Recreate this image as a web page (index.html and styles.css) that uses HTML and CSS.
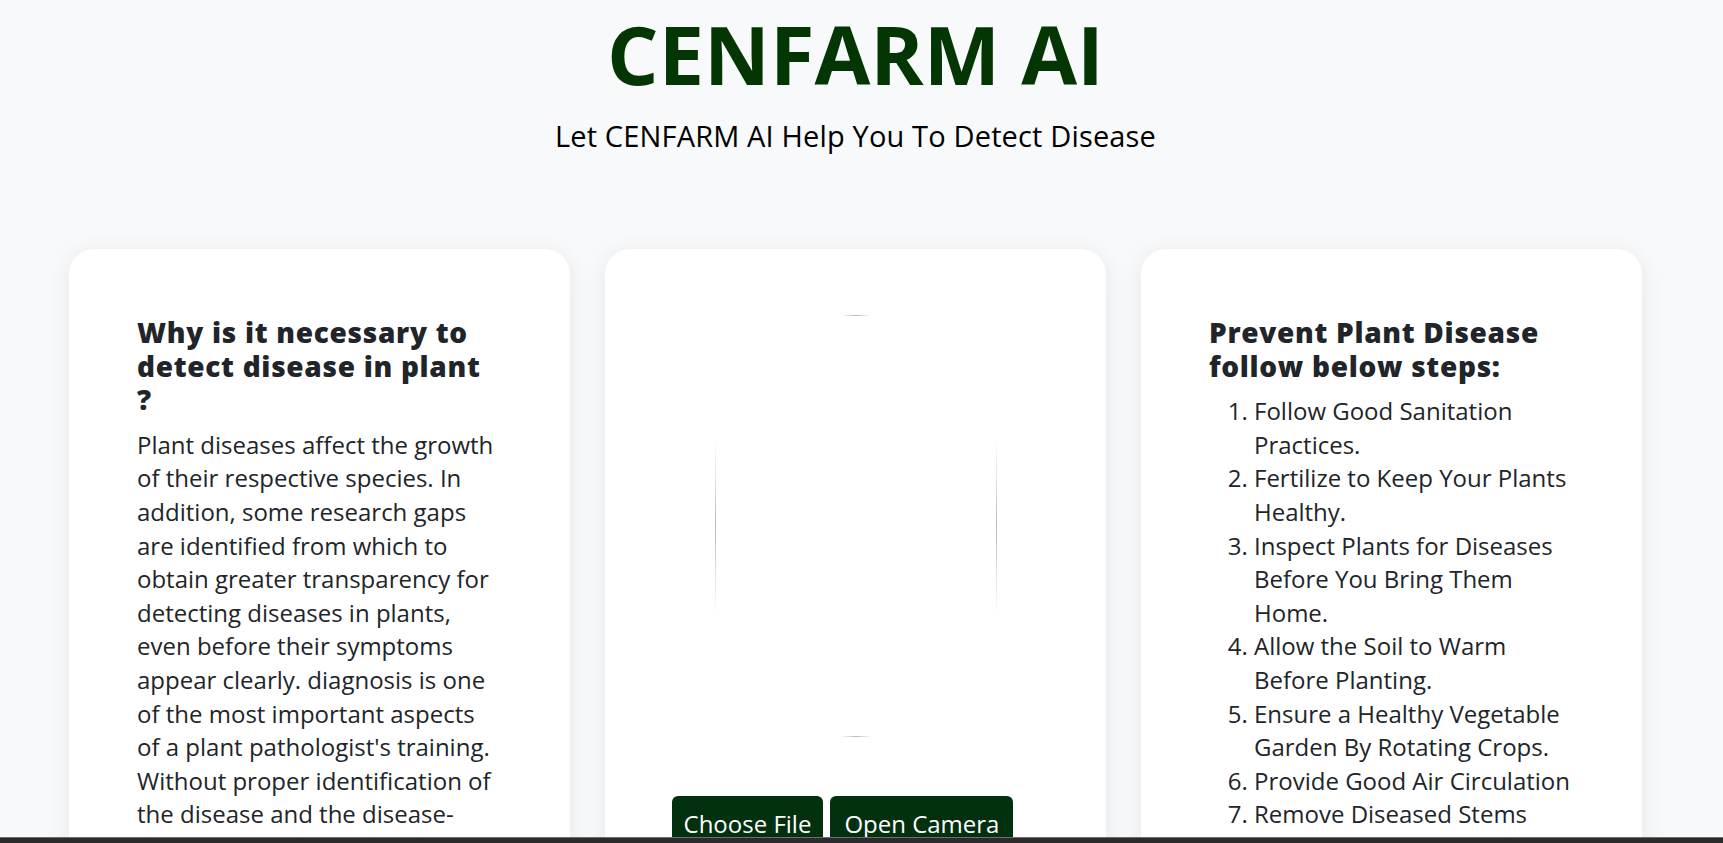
FILE: index.html
```html
<!DOCTYPE html>
<html lang="en">
<head>
<meta charset="utf-8">
<title>CENFARM AI</title>
<link rel="stylesheet" href="styles.css">
</head>
<body>
<header class="header">
  <h1 class="title">CENFARM AI</h1>
  <p class="subtitle">Let CENFARM AI Help You To Detect Disease</p>
</header>
<main class="cards">
  <section class="card">
    <h3 class="card-title">Why is it necessary to detect disease in plant ?</h3>
    <p class="card-text">Plant diseases affect the growth of their respective species. In addition, some research gaps are identified from which to obtain greater transparency for detecting diseases in plants, even before their symptoms appear clearly. diagnosis is one of the most important aspects of a plant pathologist's training. Without proper identification of the disease and the disease-causing agent, disease control measures can be a waste of time and money and can lead to further plant losses. Proper disease diagnosis is necessary.</p>
  </section>
  <section class="card card-upload">
    <div class="preview">
      <svg width="282" height="422" viewBox="0 0 282 422">
        <defs>
          <linearGradient id="gh" x1="0" y1="0" x2="1" y2="0">
            <stop offset="0" stop-color="#c4c4c4" stop-opacity="0"/>
            <stop offset="0.5" stop-color="#b8b8b8"/>
            <stop offset="1" stop-color="#c4c4c4" stop-opacity="0"/>
          </linearGradient>
          <linearGradient id="gv" x1="0" y1="0" x2="0" y2="1">
            <stop offset="0" stop-color="#c4c4c4" stop-opacity="0"/>
            <stop offset="0.5" stop-color="#b8b8b8"/>
            <stop offset="1" stop-color="#c4c4c4" stop-opacity="0"/>
          </linearGradient>
        </defs>
        <rect x="125" y="0" width="32" height="1" fill="url(#gh)"/>
        <rect x="125" y="421" width="32" height="1" fill="url(#gh)"/>
        <rect x="0" y="122" width="1" height="178" fill="url(#gv)"/>
        <rect x="281" y="122" width="1" height="178" fill="url(#gv)"/>
      </svg>
    </div>
    <div class="actions">
      <button class="btn" type="button">Choose File</button>
      <button class="btn btn-wide" type="button">Open Camera</button>
    </div>
  </section>
  <section class="card">
    <h3 class="card-title">Prevent Plant Disease follow below steps:</h3>
    <ol class="steps">
      <li>Follow Good Sanitation Practices.</li>
      <li>Fertilize to Keep Your Plants Healthy.</li>
      <li>Inspect Plants for Diseases Before You Bring Them Home.</li>
      <li>Allow the Soil to Warm Before Planting.</li>
      <li>Ensure a Healthy Vegetable Garden By Rotating Crops.</li>
      <li>Provide Good Air Circulation</li>
      <li>Remove Diseased Stems</li>
      <li>Get the Jump on Pests</li>
    </ol>
  </section>
</main>
<div class="bottom-bar"></div>
</body>
</html>
```

FILE: styles.css
```css
html, body {
  margin: 0;
  padding: 0;
}

body {
  background: #f8f9fa;
  font-family: "Open Sans", "Noto Sans", sans-serif;
  color: #212529;
}

.header {
  padding: 5px 12px 0 0;
  text-align: center;
}

.title {
  margin: 0;
  font-size: 81px;
  font-weight: 700;
  line-height: 1.2;
  color: #043604;
}

.subtitle {
  margin: 17px 0 0;
  font-size: 29px;
  line-height: 1.2;
  letter-spacing: 0.15px;
  color: #000;
}

.cards {
  display: flex;
  gap: 35px;
  padding: 95px 0 0 69px;
}

.card {
  box-sizing: border-box;
  width: 501px;
  flex: 0 0 501px;
  background: #fff;
  border-radius: 25px;
  padding: 67px 68px 65px;
  box-shadow: 0 4px 24px rgba(0, 0, 0, 0.08);
}

.card-title {
  margin: 0 0 11px;
  max-width: 352px;
  font-size: 28px;
  font-weight: 800;
  line-height: 1.2;
  letter-spacing: 0.7px;
  color: #212529;
}

.card-text {
  margin: 0;
  font-size: 24px;
  line-height: 1.4;
}

.steps {
  margin: 0;
  padding-left: 45px;
  font-size: 24px;
  line-height: 1.4;
}

.card-upload {
  padding: 66px 0 65px;
}

.preview {
  width: 282px;
  height: 422px;
  margin: 0 auto;
}

.preview svg {
  display: block;
}

.actions {
  display: flex;
  justify-content: center;
  gap: 7px;
  margin-top: 59px;
  padding-right: 26px;
}

.btn {
  border: 0;
  border-radius: 6px;
  background: #03300f;
  color: #fff;
  font-family: "Open Sans", "Noto Sans", sans-serif;
  font-size: 24px;
  line-height: 1.4;
  padding: 11px 12px;
}

.btn-wide {
  padding: 11px 14px;
}

.bottom-bar {
  position: fixed;
  left: 0;
  right: 0;
  bottom: 0;
  height: 5px;
  background: #2b2b2b;
  border-top: 1px solid #6e6e6e;
}
```
